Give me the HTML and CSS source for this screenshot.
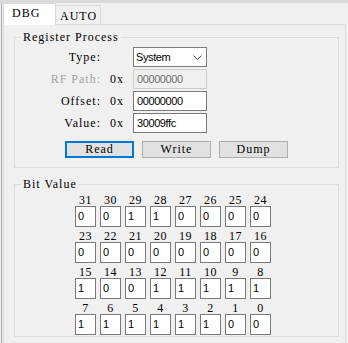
FILE: index.html
```html
<!DOCTYPE html>
<html>
<head>
<meta charset="utf-8">
<link rel="stylesheet" href="styles.css">
</head>
<body>
<div class="topband"></div>
<div class="window">
  <div class="tabs">
    <div class="tab active">DBG</div>
    <div class="tab">AUTO</div>
  </div>
  <div class="panel">
    <fieldset class="group reg">
      <legend>Register Process</legend>
      <div class="rows">
        <div class="row">
          <span class="lbl">Type:</span><span class="pre"></span>
          <div class="combo"><span class="val">System</span>
            <svg class="chev" width="9" height="5" viewBox="0 0 9 5"><path d="M0.5 0.5 L4.5 4.5 L8.5 0.5" fill="none" stroke="#444" stroke-width="1"/></svg>
          </div>
        </div>
        <div class="row disabled">
          <span class="lbl">RF Path:</span><span class="pre">0x</span>
          <div class="field"><span class="val">00000000</span></div>
        </div>
        <div class="row">
          <span class="lbl">Offset:</span><span class="pre">0x</span>
          <div class="field"><span class="val">00000000</span></div>
        </div>
        <div class="row">
          <span class="lbl">Value:</span><span class="pre">0x</span>
          <div class="field"><span class="val">30009ffc</span></div>
        </div>
      </div>
      <div class="buttons">
        <div class="btn default">Read</div>
        <div class="btn">Write</div>
        <div class="btn">Dump</div>
      </div>
    </fieldset>
    <fieldset class="group bits">
      <legend>Bit Value</legend>
      <div class="bitgrid" id="bitgrid">
        <div class="cell"><span class="num">31</span><div class="box">0</div></div>
        <div class="cell"><span class="num">30</span><div class="box">0</div></div>
        <div class="cell"><span class="num">29</span><div class="box">1</div></div>
        <div class="cell"><span class="num">28</span><div class="box">1</div></div>
        <div class="cell"><span class="num">27</span><div class="box">0</div></div>
        <div class="cell"><span class="num">26</span><div class="box">0</div></div>
        <div class="cell"><span class="num">25</span><div class="box">0</div></div>
        <div class="cell"><span class="num">24</span><div class="box">0</div></div>
        <div class="cell"><span class="num">23</span><div class="box">0</div></div>
        <div class="cell"><span class="num">22</span><div class="box">0</div></div>
        <div class="cell"><span class="num">21</span><div class="box">0</div></div>
        <div class="cell"><span class="num">20</span><div class="box">0</div></div>
        <div class="cell"><span class="num">19</span><div class="box">0</div></div>
        <div class="cell"><span class="num">18</span><div class="box">0</div></div>
        <div class="cell"><span class="num">17</span><div class="box">0</div></div>
        <div class="cell"><span class="num">16</span><div class="box">0</div></div>
        <div class="cell"><span class="num">15</span><div class="box">1</div></div>
        <div class="cell"><span class="num">14</span><div class="box">0</div></div>
        <div class="cell"><span class="num">13</span><div class="box">0</div></div>
        <div class="cell"><span class="num">12</span><div class="box">1</div></div>
        <div class="cell"><span class="num">11</span><div class="box">1</div></div>
        <div class="cell"><span class="num">10</span><div class="box">1</div></div>
        <div class="cell"><span class="num">9</span><div class="box">1</div></div>
        <div class="cell"><span class="num">8</span><div class="box">1</div></div>
        <div class="cell"><span class="num">7</span><div class="box">1</div></div>
        <div class="cell"><span class="num">6</span><div class="box">1</div></div>
        <div class="cell"><span class="num">5</span><div class="box">1</div></div>
        <div class="cell"><span class="num">4</span><div class="box">1</div></div>
        <div class="cell"><span class="num">3</span><div class="box">1</div></div>
        <div class="cell"><span class="num">2</span><div class="box">1</div></div>
        <div class="cell"><span class="num">1</span><div class="box">0</div></div>
        <div class="cell"><span class="num">0</span><div class="box">0</div></div>
      </div>
    </fieldset>
  </div>
</div>
</body>
</html>
```
FILE: styles.css
```css
* { box-sizing: border-box; }
html, body {
  margin: 0;
  padding: 0;
}
body {
  width: 348px;
  height: 343px;
  overflow: hidden;
  background: #f0f0f0;
  font-family: "Liberation Serif", "Times New Roman", serif;
  font-size: 12px;
  letter-spacing: 1px;
  color: #000;
}
.topband {
  height: 3px;
  background: #dadada;
}
.window {
  margin-left: 1px;
  border-left: 1px solid #a9a9a9;
  padding-left: 1px;
  height: 340px;
}
.tabs {
  display: flex;
  align-items: flex-start;
  height: 21px;
}
.tab {
  height: 19px;
  margin-top: 2px;
  padding-left: 4px;
  width: 45px;
  border: 1px solid #d9d9d9;
  border-left: none;
  border-bottom: none;
  background: #f0f0f0;
  line-height: 20px;
}
.tab.active {
  position: relative;
  z-index: 1;
  margin-top: 0;
  height: 22px;
  width: 53px;
  padding-left: 8px;
  border-left: 1px solid #d9d9d9;
  background: #ffffff;
  line-height: 19px;
}
.panel {
  width: 343px;
  height: 330px;
  border: 1px solid #d9d9d9;
  padding-left: 10px;
  padding-top: 6px;
}
.group {
  width: 325px;
  margin: 0;
  padding: 0;
  border: 1px solid #dcdcdc;
  min-width: 0;
}
.group legend {
  margin-left: 6px;
  padding: 0 2px;
  line-height: 12px;
  height: 12px;
}
.reg {
  padding-top: 4px;
  padding-bottom: 9px;
}
.rows {
  display: flex;
  flex-direction: column;
  gap: 2px;
}
.row {
  display: flex;
  align-items: center;
  height: 20px;
}
.lbl {
  width: 86px;
  text-align: right;
}
.pre {
  width: 23px;
  text-align: right;
  margin-right: 9px;
}
.disabled .lbl { color: #a0a0a0; }
.combo, .field {
  width: 74px;
  height: 20px;
  border: 1px solid #7a7a7a;
  background: #fff;
  display: flex;
  align-items: center;
  padding-left: 3px;
}
.combo {
  justify-content: space-between;
  padding-right: 4px;
  padding-left: 2px;
}
.chev { display: block; margin-top: 1px; }
.disabled .field {
  border-color: #cccccc;
  background: #f0f0f0;
  color: #6d6d6d;
}
.val {
  font-family: "Liberation Sans", Arial, sans-serif;
  font-size: 11px;
  letter-spacing: -0.4px;
}
.buttons {
  display: flex;
  gap: 8px;
  margin-top: 8px;
  margin-left: 50px;
}
.btn {
  width: 69px;
  height: 17px;
  border: 1px solid #adadad;
  background: #e1e1e1;
  display: flex;
  align-items: center;
  justify-content: center;
}
.btn.default {
  border: 2px solid #0078d7;
}
.reg + .bits { margin-top: 10px; }
.bits {
  padding-top: 1px;
  padding-bottom: 1px;
}
.bitgrid {
  display: grid;
  grid-template-columns: repeat(8, 21px);
  column-gap: 4px;
  margin-left: 60px;
}
.cell {
  display: flex;
  flex-direction: column;
  align-items: center;
  padding-top: 3px;
}
.num {
  line-height: 12px;
  height: 12px;
  letter-spacing: 0.5px;
}
.box {
  width: 21px;
  height: 21px;
  border: 1px solid #7a7a7a;
  background: #fff;
  font-family: "Liberation Sans", Arial, sans-serif;
  font-size: 11px;
  letter-spacing: 0;
  line-height: 18px;
  padding-left: 2px;
  align-self: stretch;
}
```
